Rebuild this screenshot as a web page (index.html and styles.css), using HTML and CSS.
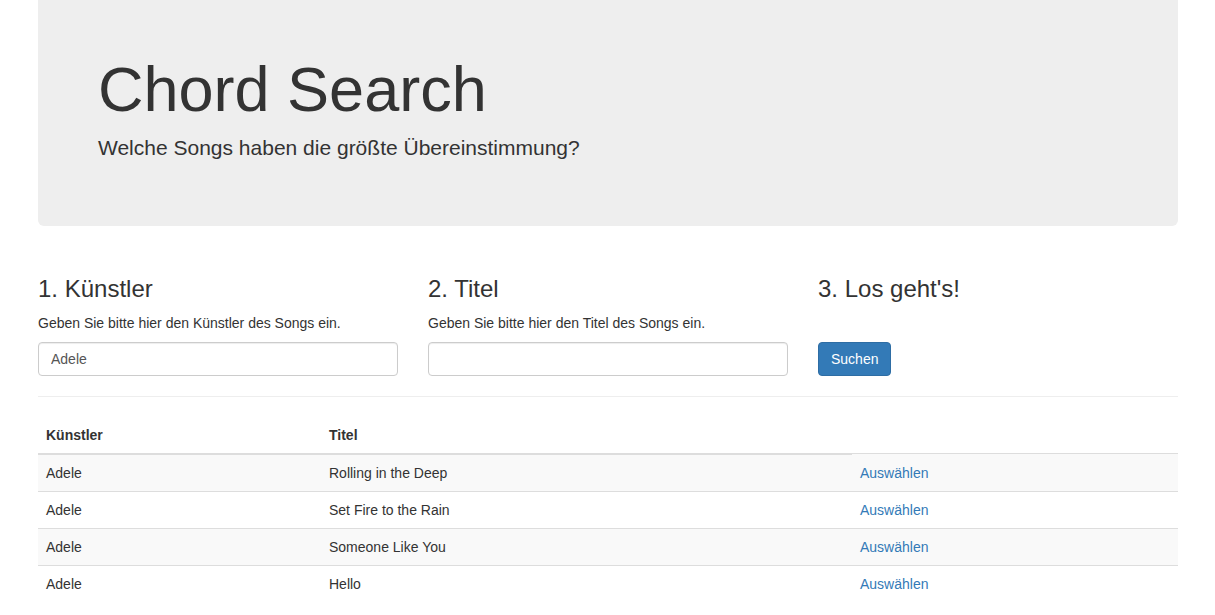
FILE: index.html
```html
<!DOCTYPE html>
<html lang="de">
<head>
<meta charset="utf-8">
<title>Chord Search</title>
<link rel="stylesheet" href="styles.css">
</head>
<body>
<div class="container">
  <div class="jumbotron">
    <h1>Chord Search</h1>
    <p>Welche Songs haben die größte Übereinstimmung?</p>
  </div>

  <div class="steps">
    <div class="step">
      <h3>1. Künstler</h3>
      <p class="help">Geben Sie bitte hier den Künstler des Songs ein.</p>
      <input class="form-control" type="text" value="Adele">
    </div>
    <div class="step">
      <h3>2. Titel</h3>
      <p class="help">Geben Sie bitte hier den Titel des Songs ein.</p>
      <input class="form-control" type="text" value="">
    </div>
    <div class="step">
      <h3>3. Los geht's!</h3>
      <p class="help">&nbsp;</p>
      <button class="btn" type="button">Suchen</button>
    </div>
  </div>

  <hr class="divider">

  <table class="results">
    <colgroup>
      <col class="c-artist">
      <col class="c-title">
      <col>
    </colgroup>
    <thead>
      <tr><th>Künstler</th><th>Titel</th></tr>
    </thead>
    <tbody>
      <tr><td>Adele</td><td>Rolling in the Deep</td><td><a href="#">Auswählen</a></td></tr>
      <tr><td>Adele</td><td>Set Fire to the Rain</td><td><a href="#">Auswählen</a></td></tr>
      <tr><td>Adele</td><td>Someone Like You</td><td><a href="#">Auswählen</a></td></tr>
      <tr><td>Adele</td><td>Hello</td><td><a href="#">Auswählen</a></td></tr>
    </tbody>
  </table>
</div>
</body>
</html>
```
FILE: styles.css
```css
* { box-sizing: border-box; }
html, body { margin: 0; padding: 0; }
body {
  font-family: "Liberation Sans", Arial, sans-serif;
  font-size: 14px;
  line-height: 1.42857;
  color: #333;
  background: #fff;
  overflow: hidden;
}
.container {
  padding: 0 37px 0 38px;
}
.jumbotron {
  background: #eee;
  border-radius: 0 0 6px 6px;
  padding: 35px 60px 48px;
  margin-bottom: 30px;
}
.jumbotron h1 {
  font-size: 63px;
  font-weight: 500;
  line-height: 1.1;
  margin: 20px 0 10px;
}
.jumbotron p {
  font-size: 21px;
  font-weight: 200;
  line-height: 30px;
  margin: -1px 0 15px;
}
.steps {
  display: grid;
  grid-template-columns: repeat(3, 1fr);
  column-gap: 30px;
}
.step h3 {
  font-size: 24px;
  font-weight: 500;
  line-height: 1.1;
  margin: 20px 0 10px;
}
.help {
  margin: 0 0 9px;
  line-height: 20px;
}
.form-control {
  display: block;
  width: 100%;
  height: 34px;
  padding: 6px 12px;
  font-family: inherit;
  font-size: 14px;
  color: #555;
  background: #fff;
  border: 1px solid #ccc;
  border-radius: 4px;
  box-shadow: inset 0 1px 1px rgba(0,0,0,.075);
}
.btn {
  display: inline-block;
  height: 34px;
  padding: 6px 12px;
  font-family: inherit;
  font-size: 14px;
  line-height: 20px;
  color: #fff;
  background: #337ab7;
  border: 1px solid #2e6da4;
  border-radius: 4px;
  vertical-align: top;
}
.divider {
  margin: 20px 0;
  border: 0;
  border-top: 1px solid #eee;
  height: 0;
}
.results {
  width: 100%;
  border-collapse: collapse;
  border-spacing: 0;
}
.c-artist { width: 283px; }
.c-title { width: 531px; }
.results th,
.results td {
  padding: 8px;
  line-height: 20px;
  text-align: left;
  vertical-align: top;
}
.results th {
  font-weight: bold;
  border-bottom: 2px solid #ddd;
}
.results td {
  border-top: 1px solid #ddd;
}
.results tbody tr:first-child td:last-child {
  padding-top: 9px;
  padding-bottom: 7px;
}
.results tbody tr:nth-child(odd) { background: #f9f9f9; }
.results a {
  color: #337ab7;
  text-decoration: none;
}
```
